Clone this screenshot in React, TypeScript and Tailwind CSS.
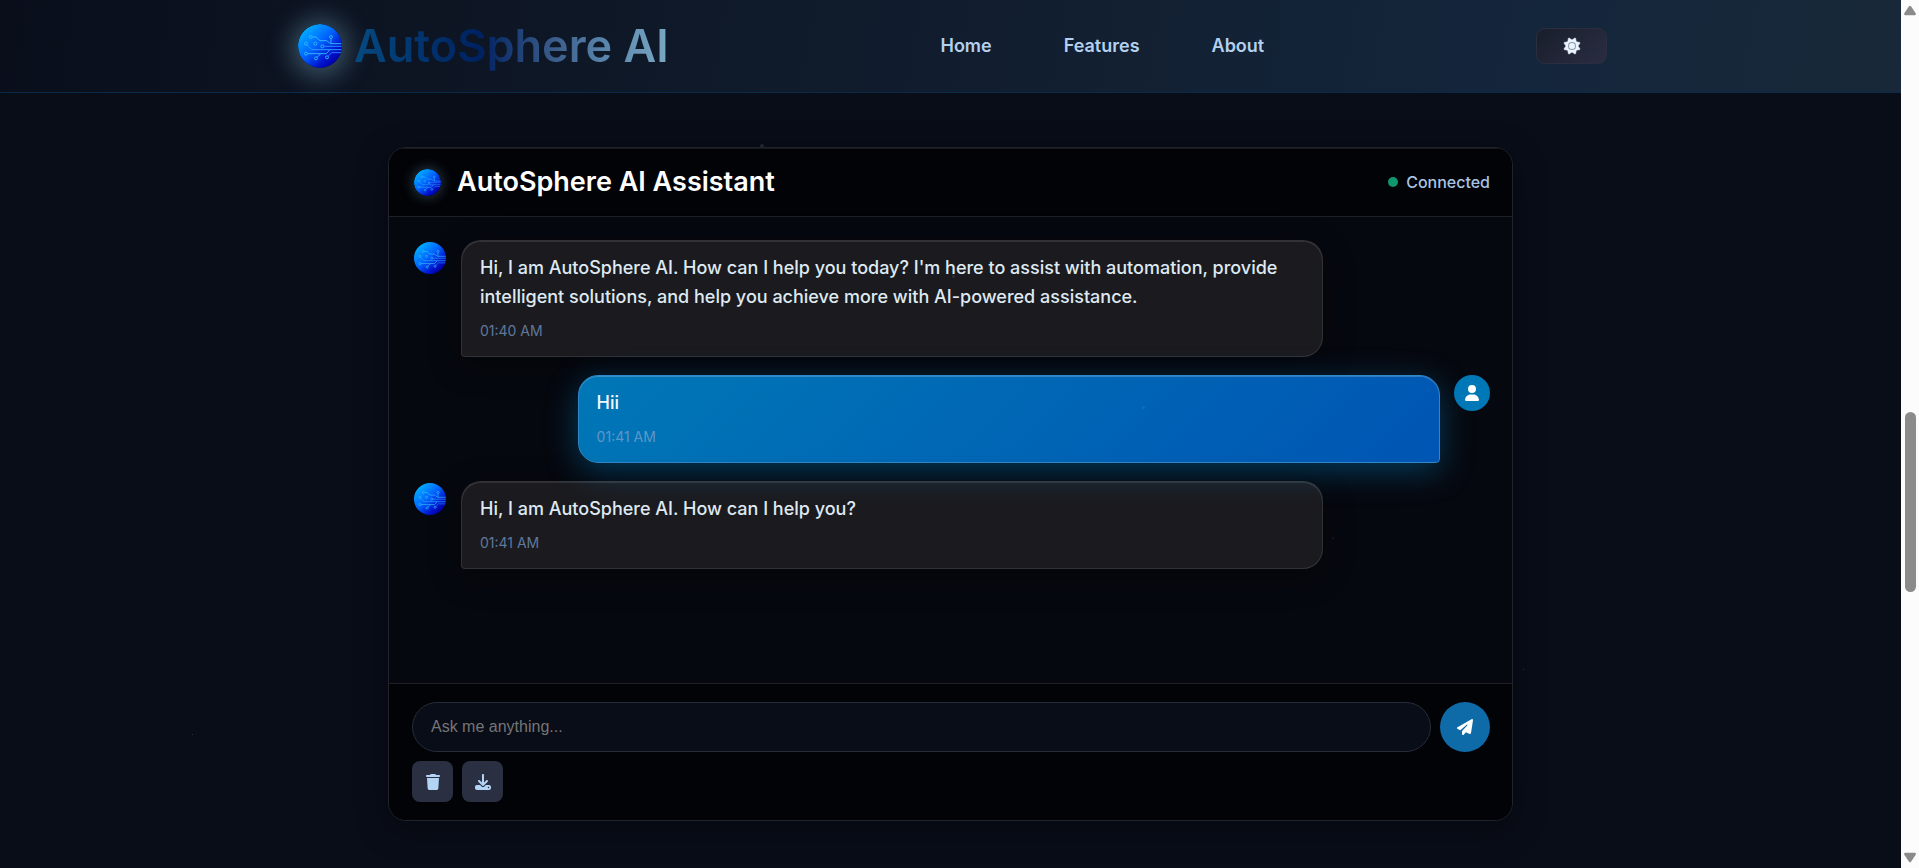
import { useId } from "react";
import { FaDownload, FaPaperPlane, FaSun, FaTrash, FaUser } from "react-icons/fa6";

function Orb({ className }: { className: string }) {
  const id = useId();
  return (
    <svg viewBox="0 0 132 132" className={className} aria-hidden="true">
      <defs>
        <linearGradient id={id} x1="0.1" y1="0.1" x2="0.85" y2="0.9">
          <stop offset="0" stopColor="#00b4ff" />
          <stop offset="0.45" stopColor="#0066ff" />
          <stop offset="0.8" stopColor="#0012cc" />
          <stop offset="1" stopColor="#0000a0" />
        </linearGradient>
      </defs>
      <circle cx="66" cy="66" r="66" fill={`url(#${id})`} />
      <g fill="none" stroke="#2fb4ff" strokeWidth="3" strokeLinejoin="round">
        <path d="M43 39H54L66 50H86L97 59H131" />
        <path d="M99 44V59" />
        <path d="M28 63L41 77H131" stroke="#2a9cff" />
        <path d="M78 67H131" stroke="#2a8cff" />
        <path d="M29 89H85L95 78" />
        <path d="M58 99L68 89" />
        <path d="M91 96L101 86H129" stroke="#2a7cff" />
        <circle cx="38" cy="39" r="4.5" />
        <circle cx="99" cy="39" r="4.5" />
        <circle cx="24" cy="59" r="4.5" />
        <circle cx="52" cy="59" r="4.5" />
        <circle cx="73" cy="67" r="4.5" />
        <circle cx="24" cy="89" r="4.5" />
        <circle cx="54" cy="103" r="4.5" />
        <circle cx="87" cy="100" r="4.5" />
      </g>
    </svg>
  );
}

type Message = { from: "bot" | "user"; text: string; time: string };

const messages: Message[] = [
  {
    from: "bot",
    text: "Hi, I am AutoSphere AI. How can I help you today? I'm here to assist with automation, provide intelligent solutions, and help you achieve more with AI-powered assistance.",
    time: "01:40 AM",
  },
  { from: "user", text: "Hii", time: "01:41 AM" },
  { from: "bot", text: "Hi, I am AutoSphere AI. How can I help you?", time: "01:41 AM" },
];

function MessageRow({ message }: { message: Message }) {
  if (message.from === "user") {
    return (
      <li className="flex flex-row-reverse items-start gap-[14px]">
        <span className="flex size-9 shrink-0 items-center justify-center rounded-full bg-[#0077b6] text-white">
          <FaUser className="size-4" />
        </span>
        <div className="w-4/5 rounded-[20px] rounded-br-[4px] border border-[#2f86c8] bg-linear-135 from-[#0077b6] to-[#0055b3] px-[18px] pt-3 pb-[14px] shadow-[0_8px_32px_rgba(0,119,182,0.45),inset_0_1px_0_rgba(255,255,255,0.2)]">
          <p className="text-lg/[29px] font-medium text-[#f4f8fc]">{message.text}</p>
          <time className="mt-[9px] block text-sm/[22px] text-[#5f96c8]">{message.time}</time>
        </div>
      </li>
    );
  }
  return (
    <li className="flex items-start gap-[13px]">
      <span className="flex size-9 shrink-0 items-center justify-center">
        <Orb className="size-8" />
      </span>
      <div className="w-4/5 rounded-[20px] rounded-bl-[4px] border border-white/10 bg-[rgba(255,235,210,0.085)] px-[18px] pt-3 pb-[14px] shadow-[0_8px_32px_rgba(0,0,0,0.3),inset_0_1px_0_rgba(255,255,255,0.1)]">
        <p className="text-lg/[29px] font-medium text-[#dfe9f2]">{message.text}</p>
        <time className="mt-[9px] block text-sm/[22px] text-[#5f789c]">{message.time}</time>
      </div>
    </li>
  );
}

function Particles() {
  return (
    <div className="pointer-events-none absolute inset-0" aria-hidden="true">
      <span className="absolute top-[51px] left-[760px] size-1 rounded-full bg-[#1e2630]" />
      <span className="absolute top-[182px] left-[952px] size-[3px] rounded-full bg-[#2a3238]" />
      <span className="absolute top-[313px] left-[1142px] size-[3px] rounded-full bg-[#106fbe]" />
      <span className="absolute top-[444px] left-[1332px] size-[2px] rounded-full bg-[#161c24]" />
      <span className="absolute top-[576px] left-[1523px] size-px bg-[#2a3240]" />
      <span className="absolute top-[641px] left-[192px] size-px bg-[#2a3240]" />
    </div>
  );
}

function ScrollRail() {
  return (
    <div className="flex w-[18px] shrink-0 flex-col items-center bg-[#fcfcfc] py-[5px]" aria-hidden="true">
      <svg viewBox="0 0 12 10" className="h-[11px] w-3 fill-[#8b8b8b]">
        <path d="M5 .8q1-1 2 0l4.700 7q.5 2-1 2H1.300q-1.500 0-1-2z" />
      </svg>
      <div className="flex w-full grow flex-col items-center">
        <div className="grow-[396]" />
        <div className="w-[11px] grow-[181] rounded-full bg-[#8b8b8b]" />
        <div className="grow-[260]" />
      </div>
      <svg viewBox="0 0 12 10" className="h-[11px] w-3 rotate-180 fill-[#8b8b8b]">
        <path d="M5 .8q1-1 2 0l4.700 7q.5 2-1 2H1.300q-1.500 0-1-2z" />
      </svg>
    </div>
  );
}

export default function App() {
  return (
    <div className="flex min-h-screen bg-[#090d18] font-['Inter',sans-serif]">
      <div className="min-w-0 grow">
        <header className="relative border-b border-[#0c2b4b] bg-linear-[100deg,#0a0e1b_0%,#0e1726_30%,#122032_60%,#14263c_80%,#182838_100%]">
          <div className="mx-auto flex h-[92px] max-w-[1313px] items-center justify-between">
            <a href="#home" className="flex items-center gap-2">
              <span className="flex size-[52px] items-center justify-center">
                <Orb className="size-11 rounded-full shadow-[0_2px_26px_6px_rgba(140,200,225,0.38)]" />
              </span>
              <span className="bg-linear-[90deg,#054a80_0%,#00306a_25%,#002160_40%,#3a5c8a_63%,#5a86ad_80%,#7aa8c2_100%] bg-clip-text text-[45px]/[54px] font-semibold text-transparent">
                AutoSphere AI
              </span>
            </a>
            <nav className="flex gap-[72px] text-lg font-semibold text-[#b4d0ef]">
              <a href="#home">Home</a>
              <a href="#features">Features</a>
              <a href="#about">About</a>
            </nav>
            <button
              type="button"
              aria-label="Toggle theme"
              className="flex h-9 w-[71px] items-center justify-center rounded-[9px] border border-[#2b2e3e] bg-linear-135 from-[#191e2c] to-[#2a2d42] text-[#eaf4ff]"
            >
              <FaSun className="size-4 overflow-visible stroke-current stroke-[20]" />
            </button>
          </div>
        </header>

        <main className="relative px-4 pt-[54px] pb-[46px]">
          <section className="mx-auto max-w-[1125px] overflow-hidden rounded-[18px] border border-[#20242a] bg-[#06080f] shadow-[0_8px_32px_rgba(0,0,0,0.4)]">
            <div className="flex h-[69px] items-center justify-between border-b border-[#1e2026] bg-[#020307] pr-[22px] pl-[25px] shadow-[inset_0_1px_0_#16191e]">
              <div className="flex items-center gap-4">
                <Orb className="size-[27px] rounded-full shadow-[0_0_12px_2px_rgba(140,200,225,0.25)]" />
                <h1 className="text-[27px]/[36px] font-semibold text-white">AutoSphere AI Assistant</h1>
              </div>
              <p className="flex items-center gap-2 text-base font-medium text-[#a9c4e2]">
                <span className="size-[10px] rounded-full bg-[#0f966c]" />
                Connected
              </p>
            </div>

            <ul className="flex h-[466px] flex-col gap-[18px] pt-[23px] pr-[22px] pl-[23px]">
              {messages.map((message, i) => (
                <MessageRow key={i} message={message} />
              ))}
            </ul>

            <form
              className="border-t border-[#1e2026] bg-[#020307] py-[18px] pr-[22px] pl-[23px]"
              onSubmit={(e) => e.preventDefault()}
            >
              <div className="flex items-center gap-[9px]">
                <input
                  type="text"
                  aria-label="Message"
                  placeholder="Ask me anything..."
                  className="h-[50px] min-w-0 grow rounded-full border border-[#262c3a] bg-[#090d18] px-[18px] font-['Liberation_Sans',sans-serif] text-base text-[#dfe9f2] placeholder:text-[#757575]"
                />
                <button
                  type="submit"
                  aria-label="Send"
                  className="flex size-[50px] shrink-0 items-center justify-center rounded-full bg-[#0f6aa8] text-white"
                >
                  <FaPaperPlane className="size-4" />
                </button>
              </div>
              <div className="mt-[9px] flex gap-[9px]">
                <button
                  type="button"
                  aria-label="Clear chat"
                  className="flex size-[41px] items-center justify-center rounded-lg bg-[#2a3042] text-[#b4d4f6]"
                >
                  <FaTrash className="size-4" />
                </button>
                <button
                  type="button"
                  aria-label="Download chat"
                  className="flex size-[41px] items-center justify-center rounded-lg bg-[#2a3042] text-[#b4d4f6]"
                >
                  <FaDownload className="size-4" />
                </button>
              </div>
            </form>
          </section>
          <Particles />
        </main>
      </div>
      <ScrollRail />
    </div>
  );
}
